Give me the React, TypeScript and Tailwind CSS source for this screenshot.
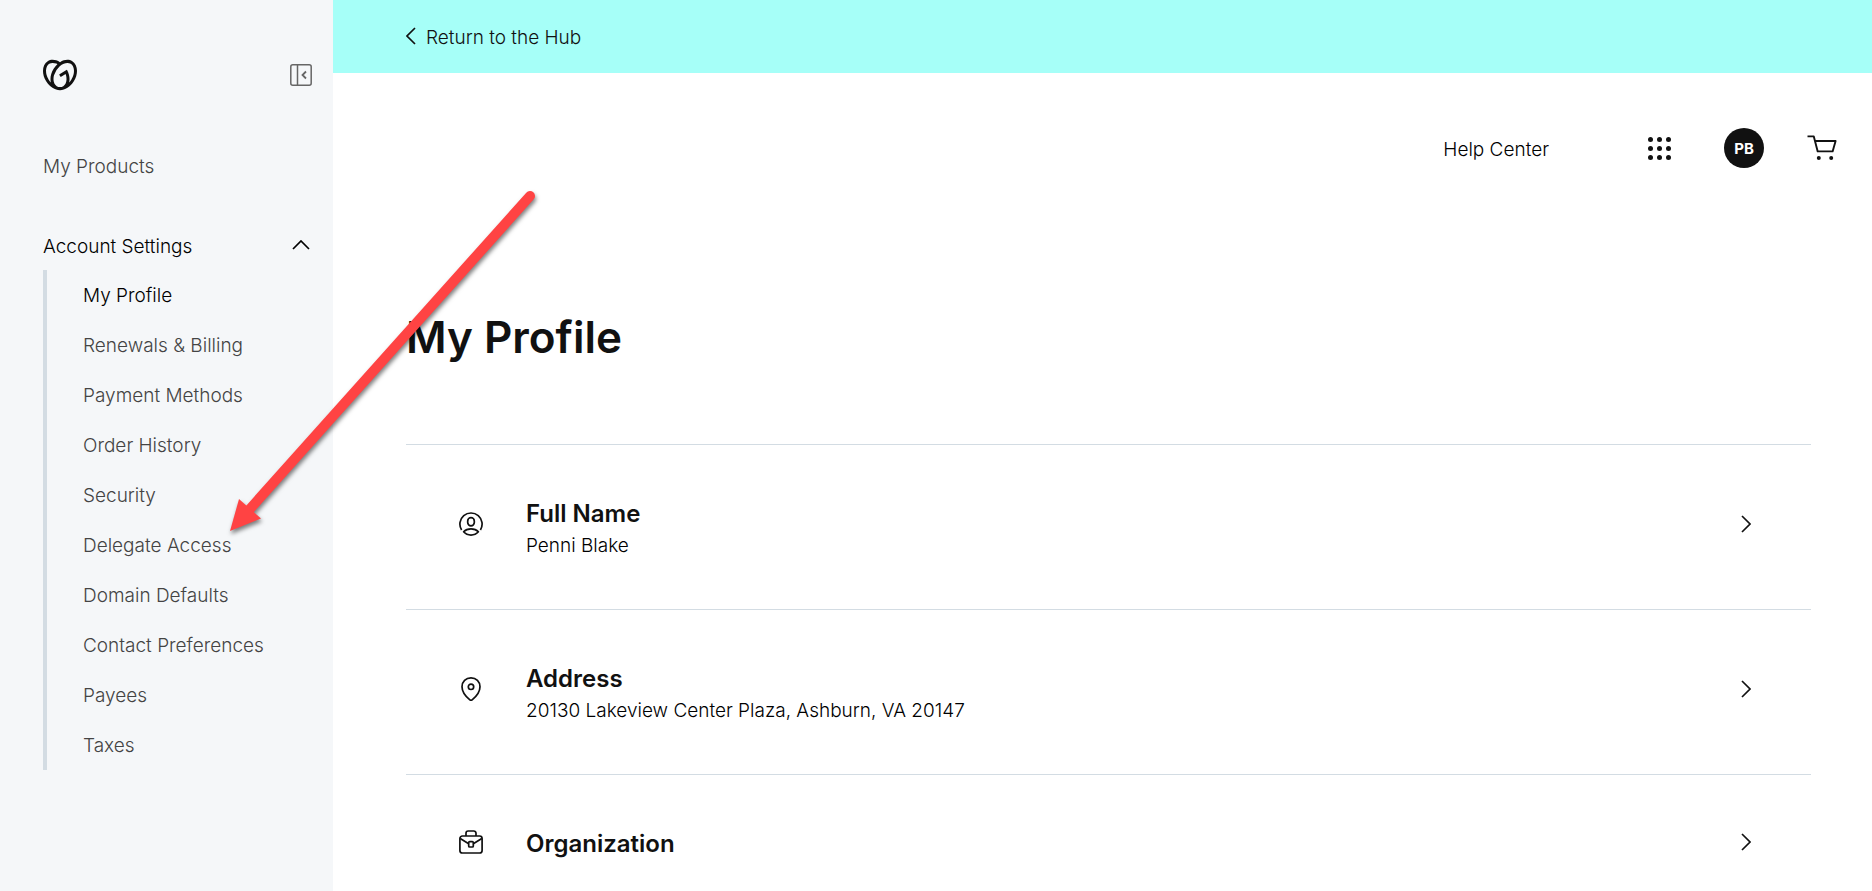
import type { ReactNode } from 'react';
import { SiGodaddy } from 'react-icons/si';

const SETTINGS = [
  'My Profile',
  'Renewals & Billing',
  'Payment Methods',
  'Order History',
  'Security',
  'Delegate Access',
  'Domain Defaults',
  'Contact Preferences',
  'Payees',
  'Taxes',
];

function Chevron({ direction }: { direction: 'left' | 'right' | 'up' }) {
  const points = { left: '11,2 3,10 11,18', right: '3,2 11,10 3,18', up: '2,11 10,3 18,11' };
  const size = direction === 'up' ? 'h-[10px] w-[18px]' : 'h-[18px] w-[10px]';
  const box = direction === 'up' ? '1 2 18 10' : '2 1 10 18';
  return (
    <svg viewBox={box} className={size} fill="none" stroke="currentColor" strokeWidth="1.7" aria-hidden="true">
      <polyline points={points[direction]} />
    </svg>
  );
}

function PanelIcon() {
  return (
    <svg viewBox="0 0 22 22" className="size-[22px]" fill="none" stroke="currentColor" strokeWidth="1.5" aria-hidden="true">
      <rect x="0.8" y="0.8" width="20.4" height="20.4" rx="2" />
      <path d="M7.5 1v20" />
      <path d="M16 7.5 12.5 11l3.5 3.5" strokeWidth="1.8" />
    </svg>
  );
}

function GridIcon() {
  const steps = [2.5, 11.5, 20.5];
  return (
    <svg viewBox="0 0 23 23" className="size-[23px]" fill="currentColor" aria-hidden="true">
      {steps.map((y) => steps.map((x) => <circle key={`${x}-${y}`} cx={x} cy={y} r="2.5" />))}
    </svg>
  );
}

function CartIcon() {
  return (
    <svg viewBox="0 0 30 26" className="h-[26px] w-[30px]" fill="none" stroke="currentColor" strokeWidth="1.9" aria-hidden="true">
      <path d="M0.5 1.4h6.3l3.9 15h14.9L28.6 6H8" strokeLinejoin="round" />
      <circle cx="11.8" cy="23" r="2" fill="currentColor" stroke="none" />
      <circle cx="24.2" cy="23" r="2" fill="currentColor" stroke="none" />
    </svg>
  );
}

function UserIcon() {
  return (
    <svg viewBox="0 0 24 24" className="size-6" fill="none" stroke="currentColor" strokeWidth="1.7" aria-hidden="true">
      <path d="M2.6 18A11.1 11.1 0 1 1 21.4 18" />
      <rect x="8.7" y="5.6" width="6.6" height="8.2" rx="3.3" />
      <path d="M4.6 19.8c2-2.2 4.5-3 7.4-3s5.4.8 7.4 3c-2 2.3-4.5 3.3-7.4 3.3s-5.4-1-7.4-3.3Z" strokeLinejoin="round" />
    </svg>
  );
}

function PinIcon() {
  return (
    <svg viewBox="0 0 24 24" className="size-6" fill="none" stroke="currentColor" strokeWidth="1.7" aria-hidden="true">
      <path d="M12 .9C6.8.9 3 4.8 3 9.8c0 4.8 3.8 9.7 7.6 12.9.9.7 1.900.7 2.800 0C17.200 19.500 21 14.600 21 9.800 21 4.800 17.200.9 12 .9Z" />
      <circle cx="12" cy="9.8" r="2.7" />
    </svg>
  );
}

function BriefcaseIcon() {
  return (
    <svg viewBox="0 0 24 24" className="size-6" fill="none" stroke="currentColor" strokeWidth="1.7" strokeLinejoin="round" aria-hidden="true">
      <rect x="0.9" y="6" width="22.2" height="17" rx="2.5" />
      <path d="M7 6V3.2A2.2 2.2 0 0 1 9.2 1h5.6A2.2 2.2 0 0 1 17 3.2V6" />
      <path d="M1.2 8.5l8.5 5.2M22.8 8.5l-8.5 5.2" />
      <rect x="9.7" y="11.7" width="4.6" height="5.3" rx="1" />
    </svg>
  );
}

function ProfileRow({ icon, title, detail }: { icon: ReactNode; title: string; detail?: string }) {
  return (
    <li className="border-t border-[#d3dce3]">
      <a href="#" className="flex items-center gap-[43px] pt-[49px] pr-15 pb-[51px] pl-[53px]">
        <span className="pb-[5px]">{icon}</span>
        <div className="flex-1">
          <h2 className="text-2xl leading-10 font-semibold">{title}</h2>
          {detail && <p className="text-[19px] leading-6 font-light text-black">{detail}</p>}
        </div>
        <span className="pb-[5px]">
          <Chevron direction="right" />
        </span>
      </a>
    </li>
  );
}

function PointerArrow() {
  return (
    <svg
      viewBox="0 0 320 350"
      className="pointer-events-none absolute top-[190px] left-[225px] h-[350px] w-[320px] drop-shadow-[1px_3px_2px_rgba(0,0,0,0.5)]"
      aria-hidden="true"
    >
      <line x1="305" y1="6" x2="24" y2="320" stroke="#ff4343" strokeWidth="10" strokeLinecap="round" />
      <polygon points="5,341 14,309 36,328.5" fill="#ff4343" />
    </svg>
  );
}

export default function App() {
  return (
    <div className="relative flex h-screen overflow-hidden bg-white font-['Inter',sans-serif] text-[#111]">
      <aside className="w-[333px] shrink-0 bg-[#f5f7f9] text-[19px] leading-[30px] font-light text-[#444]">
        <div className="flex items-center justify-between pt-[58px] pr-[21px] pl-[43px]">
          <a href="#" aria-label="Home" className="text-[#111]">
            <SiGodaddy className="size-[34px]" />
          </a>
          <button type="button" aria-label="Collapse sidebar" className="text-[#666]">
            <PanelIcon />
          </button>
        </div>
        <nav className="pt-15 pr-[23px] pl-[43px]">
          <a href="#" className="block">My Products</a>
          <button type="button" className="mt-[50px] flex w-full items-center justify-between text-black">
            Account Settings
            <span className="flex pb-1">
              <Chevron direction="up" />
            </span>
          </button>
          <ul className="mt-2 border-l-4 border-[#d3dce3] pl-9">
            {SETTINGS.map((item, index) => (
              <li key={item}>
                <a href="#" className={index === 0 ? 'block pt-[11px] pb-[9px] text-black' : 'block pt-[11px] pb-[9px]'}>
                  {item}
                </a>
              </li>
            ))}
          </ul>
        </nav>
      </aside>

      <div className="min-w-0 flex-1">
        <div className="bg-[#a6fff8] px-[73px] pt-[22px] pb-5">
          <a href="#" className="flex w-fit items-center gap-[10px] text-[19px] leading-[31px] font-light">
            <span className="flex pb-[3px]">
              <Chevron direction="left" />
            </span>
            Return to the Hub
          </a>
        </div>
        <header className="flex items-center justify-end pt-[55px] pr-[35px]">
          <a href="#" className="mr-[99px] pt-1 text-[19px] font-light text-black">Help Center</a>
          <button type="button" aria-label="Apps" className="mr-[53px]">
            <GridIcon />
          </button>
          <button type="button" className="mr-[43px] size-10 rounded-full bg-[#111] pt-[3px] text-[15px] font-bold text-white">
            PB
          </button>
          <button type="button" aria-label="Cart">
            <CartIcon />
          </button>
        </header>
        <main className="pr-[61px] pl-[73px]">
          <h1 className="pt-[139px] pb-[77px] text-[44px] leading-15 font-semibold">My Profile</h1>
          <ul>
            <ProfileRow icon={<UserIcon />} title="Full Name" detail="Penni Blake" />
            <ProfileRow icon={<PinIcon />} title="Address" detail="20130 Lakeview Center Plaza, Ashburn, VA 20147" />
            <ProfileRow icon={<BriefcaseIcon />} title="Organization" />
          </ul>
        </main>
      </div>

      <PointerArrow />
    </div>
  );
}
